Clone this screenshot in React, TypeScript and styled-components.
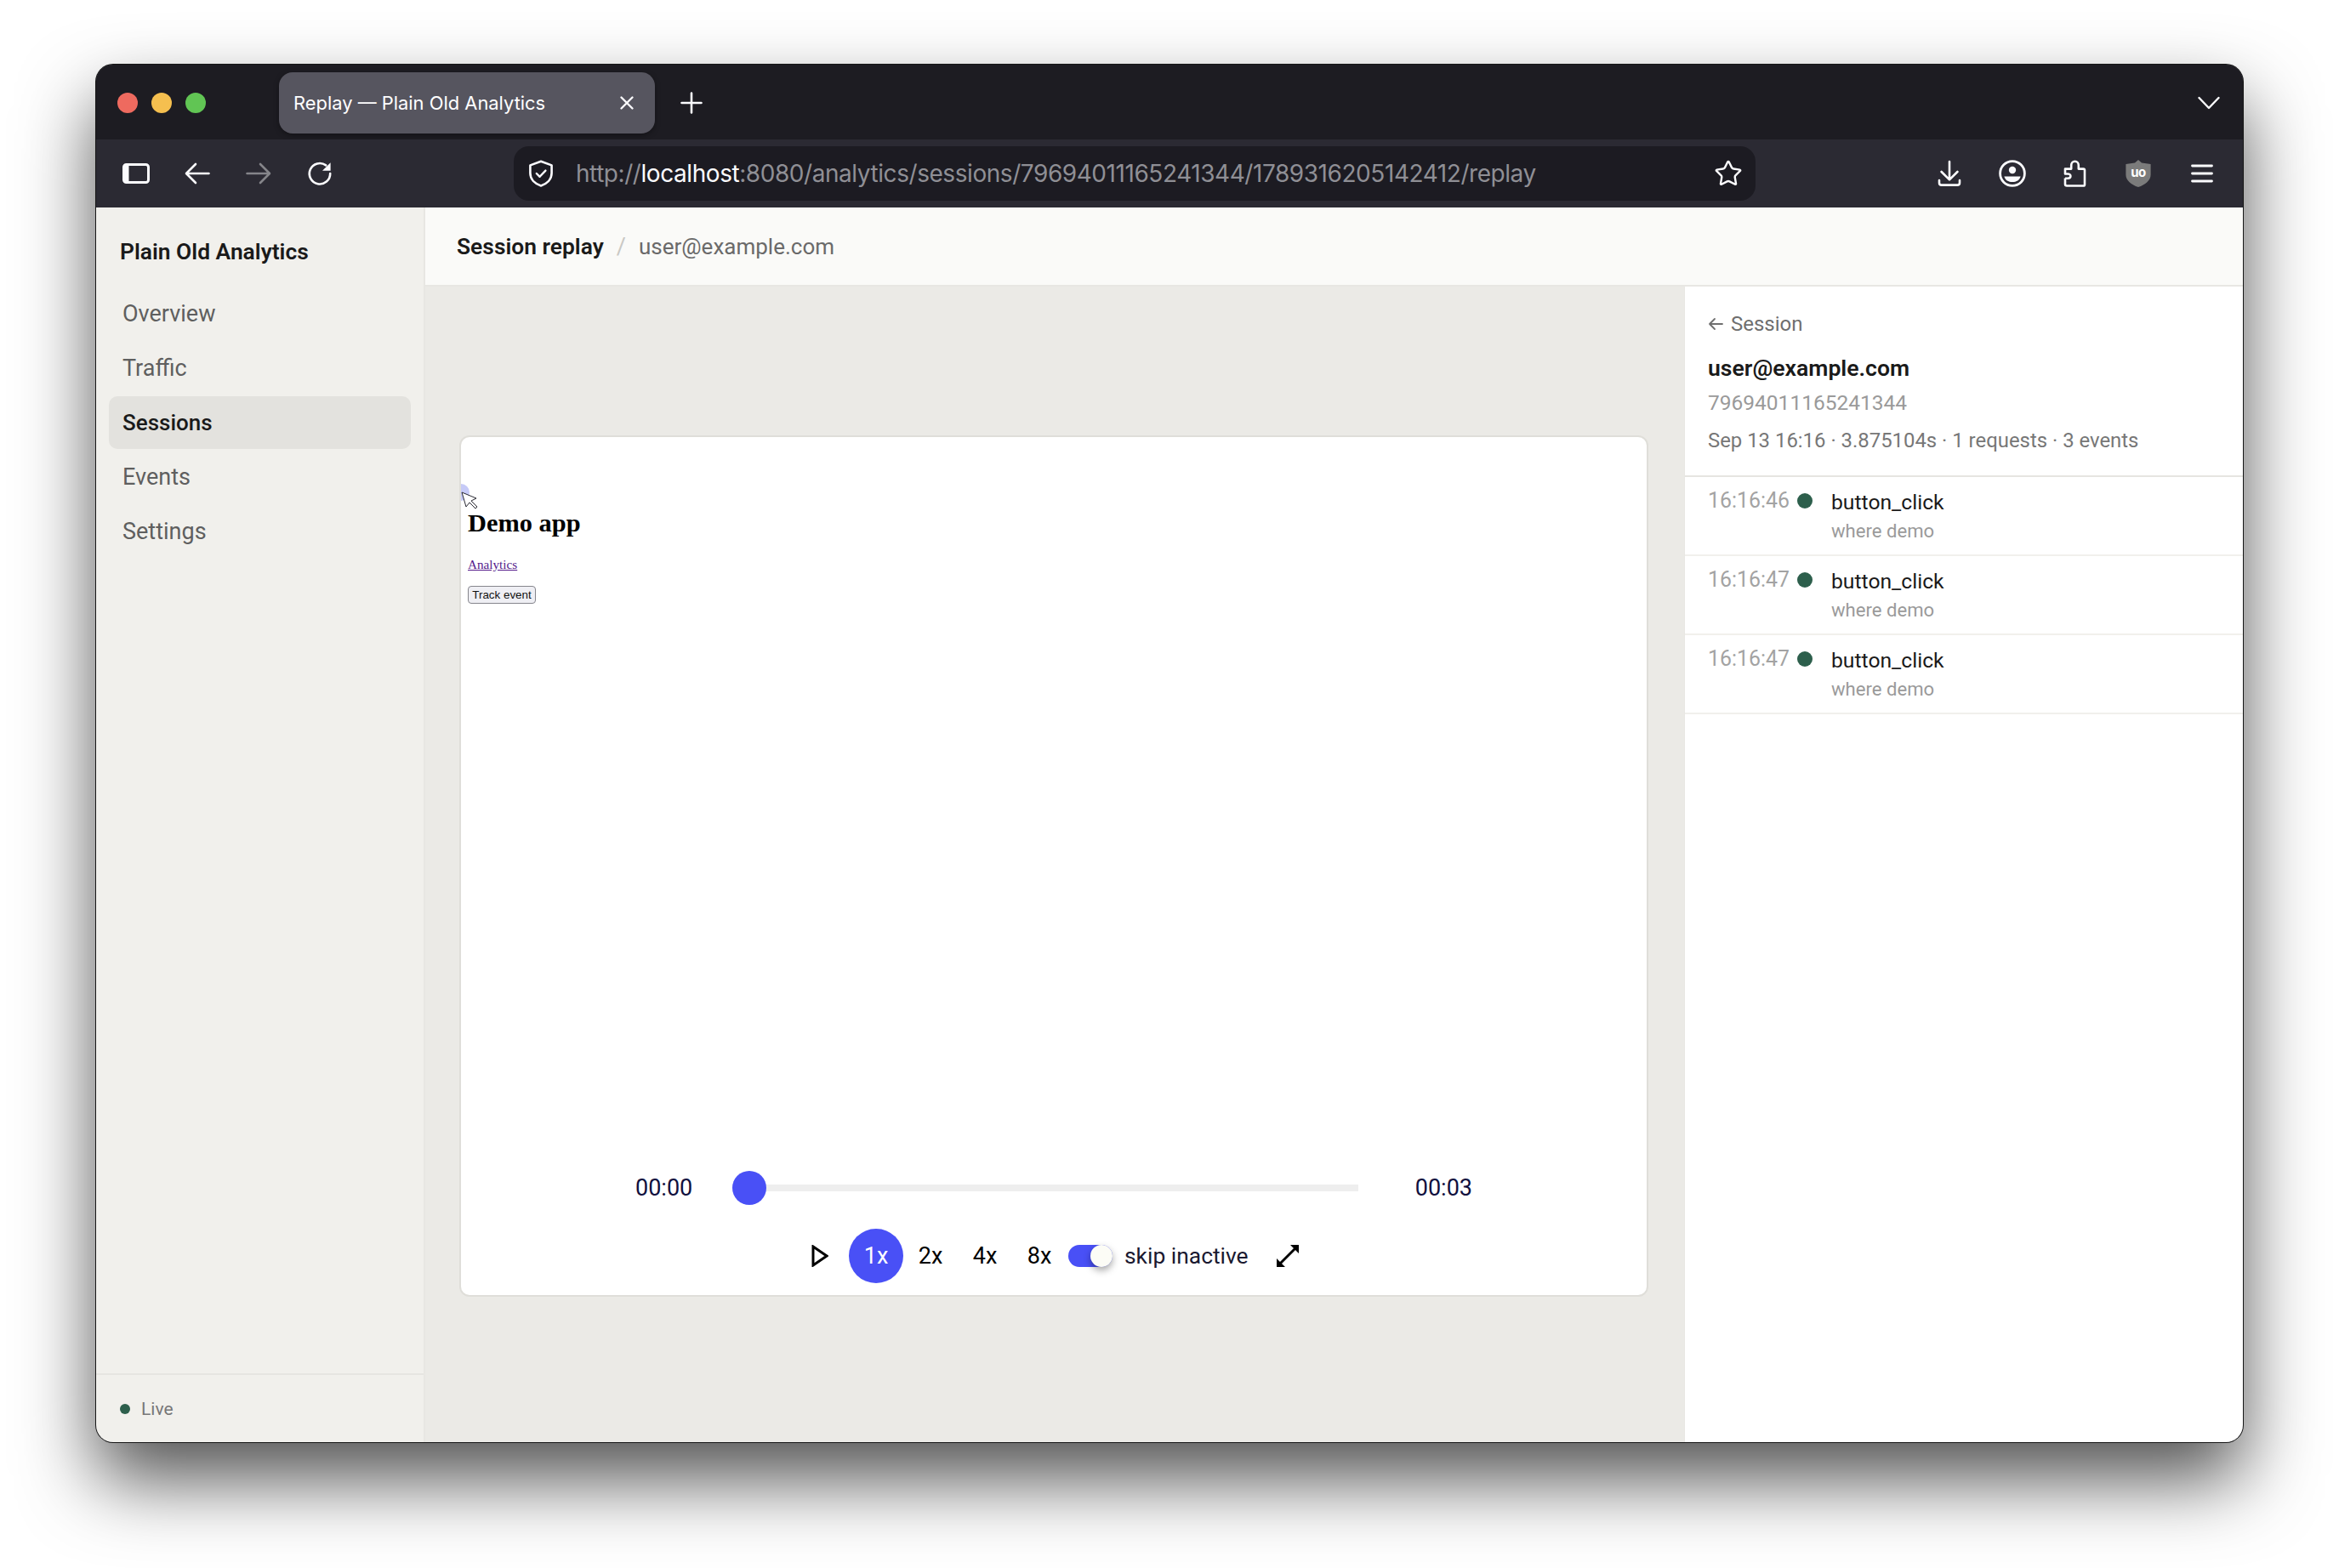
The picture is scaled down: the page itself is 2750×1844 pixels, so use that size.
import React from "react";
import styled, { createGlobalStyle } from "styled-components";
import { Star } from "lucide-react";

const plex = `Roboto, "Liberation Sans", sans-serif`;
const chrome = `Inter, "Liberation Sans", sans-serif`;
const serif = `"Liberation Serif", "Times New Roman", serif`;

const GlobalStyle = createGlobalStyle`
  html, body {
    margin: 0;
    padding: 0;
    background: #ffffff;
  }
  * {
    box-sizing: border-box;
  }
`;

const Page = styled.div`
  width: 2750px;
  height: 1844px;
  padding: 76px 113px 148px;
  display: flex;
  overflow: hidden;
  background: #ffffff;
`;

const Window = styled.div`
  flex: 1;
  display: flex;
  flex-direction: column;
  border-radius: 20px;
  overflow: hidden;
  background: #1c1b22;
  box-shadow: 0 0 0 1px #161616, inset 0 2px 0 #55555a, 0 44px 88px rgba(0, 0, 0, 0.68);
`;

const TabStrip = styled.div`
  height: 88px;
  flex: none;
  display: flex;
  align-items: center;
  padding: 1px 27px 0 25px;
  background: #1d1c22;
`;

const Lights = styled.div`
  display: flex;
  gap: 16px;
`;

const Light = styled.span<{ $color: string }>`
  width: 24px;
  height: 24px;
  border-radius: 50%;
  background: ${(p) => p.$color};
`;

const Tab = styled.div`
  width: 442px;
  height: 72px;
  margin-left: 86px;
  padding: 0 24px 0 17px;
  display: flex;
  align-items: center;
  justify-content: space-between;
  border-radius: 16px;
  background: #56555f;
  box-shadow: 0 2px 6px rgba(0, 0, 0, 0.35);
  color: #ffffff;
  font: 400 21.9px ${chrome};
`;

const NewTab = styled.span`
  margin-left: 30px;
  display: flex;
`;

const ListAll = styled.span`
  margin-left: auto;
  display: flex;
`;

const Toolbar = styled.div`
  height: 80px;
  flex: none;
  display: flex;
  align-items: center;
  padding: 0 10px 0 11px;
  background: #2b2a33;
`;

const Slot = styled.span<{ $w: number }>`
  width: ${(p) => p.$w}px;
  height: 48px;
  flex: none;
  display: flex;
  align-items: center;
  justify-content: center;
`;

const UrlBar = styled.div`
  flex: 1;
  height: 64px;
  margin: 0 191px 0 192px;
  padding: 0 15px 0 17px;
  display: flex;
  align-items: center;
  border-radius: 18px;
  background: #1c1b22;
`;

const UrlText = styled.div`
  margin-left: 26px;
  flex: 1;
  color: #8f8f95;
  font: 400 28px ${chrome};
  white-space: nowrap;
  letter-spacing: -0.44px;
`;

const UrlHost = styled.span`
  color: #fbfbfe;
`;

const Shell = styled.div`
  flex: 1;
  min-height: 0;
  display: flex;
`;

const Sidebar = styled.aside`
  width: 387px;
  flex: none;
  display: flex;
  flex-direction: column;
  background: #f1f0ec;
  border-right: 2px solid #e8e7e3;
  font-family: ${plex};
`;

const Brand = styled.div`
  margin: 36px 0 26px 28px;
  color: #1a1a1a;
  font-size: 26.4px;
  font-weight: 600;
  line-height: 32px;
`;

const Nav = styled.nav`
  display: flex;
  flex-direction: column;
  gap: 2px;
  padding: 0 15px;
`;

const NavItem = styled.a<{ $active?: boolean }>`
  height: 62px;
  padding-left: 16px;
  display: flex;
  align-items: center;
  border-radius: 10px;
  font-size: ${(p) => (p.$active ? 26 : 27)}px;
  font-weight: ${(p) => (p.$active ? 500 : 400)};
  color: ${(p) => (p.$active ? "#1a1a1a" : "#5f5f5f")};
  background: ${(p) => (p.$active ? "#e3e2de" : "transparent")};
`;

const SidebarFooter = styled.div`
  height: 81px;
  margin-top: auto;
  padding-left: 28px;
  display: flex;
  align-items: center;
  gap: 13px;
  border-top: 2px solid #e6e5e1;
  color: #777777;
  font-size: 21px;
`;

const Dot = styled.span<{ $size: number }>`
  width: ${(p) => p.$size}px;
  height: ${(p) => p.$size}px;
  flex: none;
  border-radius: 50%;
  background: #2d5f4c;
`;

const Content = styled.main`
  flex: 1;
  min-width: 0;
  display: flex;
  flex-direction: column;
  font-family: ${plex};
`;

const Header = styled.header`
  height: 93px;
  flex: none;
  padding: 1px 0 0 37px;
  display: flex;
  align-items: center;
  background: #fafaf8;
  border-bottom: 2px solid #e8e7e3;
`;

const HeaderTitle = styled.span`
  color: #1a1a1a;
  font-size: 26.4px;
  font-weight: 600;
`;

const HeaderSlash = styled.span`
  margin: 0 15px;
  color: #c9c8c4;
  font-size: 27px;
`;

const HeaderUser = styled.span`
  color: #6a6a6a;
  font-size: 26px;
`;

const Body = styled.div`
  flex: 1;
  min-height: 0;
  display: flex;
`;

const Stage = styled.div`
  flex: 1;
  padding: 0 42px 0 40px;
  display: flex;
  align-items: center;
  background: #ebeae6;
`;

const Card = styled.div`
  width: 100%;
  height: 1013px;
  margin-top: 4px;
  display: flex;
  flex-direction: column;
  overflow: hidden;
  border: 2px solid #dfded9;
  border-radius: 12px;
  background: #ffffff;
`;

const ReplayFrame = styled.div`
  position: relative;
  flex: 1;
  padding: 83px 0 0 8px;
`;

const ClickRipple = styled.span`
  position: absolute;
  left: -10px;
  top: 55px;
  width: 20px;
  height: 20px;
  border-radius: 50%;
  background: #c6caf7;
`;

const CursorMark = styled.svg`
  position: absolute;
  left: 0;
  top: 64px;
`;

const DemoTitle = styled.h1`
  margin: 0;
  color: #000000;
  font: 700 30.4px/36px ${serif};
`;

const DemoLink = styled.a`
  display: block;
  margin-top: 22px;
  color: #551a8b;
  font: 400 15.2px/18px ${serif};
  text-decoration: underline;
`;

const DemoButton = styled.button`
  display: block;
  width: 80px;
  height: 21px;
  margin-top: 16px;
  padding: 0;
  border: 1.5px solid #85858c;
  border-radius: 4px;
  background: #efeff4;
  color: #111111;
  font: 400 13.4px "Liberation Sans", sans-serif;
`;

const Controller = styled.div`
  flex: none;
  padding-bottom: 14px;
  font-family: ${plex};
`;

const Timeline = styled.div`
  width: 984px;
  height: 40px;
  margin: 0 auto 28px;
  display: flex;
  align-items: center;
`;

const TimeLabel = styled.span<{ $end?: boolean }>`
  width: ${(p) => (p.$end ? 134 : 114)}px;
  flex: none;
  color: #11103e;
  font-size: 27px;
  text-align: ${(p) => (p.$end ? "right" : "left")};
`;

const Track = styled.div`
  position: relative;
  flex: 1;
  height: 8px;
  background: #eeeeee;
`;

const Thumb = styled.span`
  position: absolute;
  left: 0;
  top: -16px;
  width: 40px;
  height: 40px;
  border-radius: 50%;
  background: #4950f6;
`;

const Controls = styled.div`
  height: 64px;
  display: flex;
  align-items: center;
  justify-content: center;
`;

const SpeedButton = styled.span<{ $active?: boolean }>`
  width: 64px;
  height: 64px;
  display: flex;
  align-items: center;
  justify-content: center;
  border-radius: 50%;
  font-size: 27px;
  color: ${(p) => (p.$active ? "#ffffff" : "#000000")};
  background: ${(p) => (p.$active ? "#4950f6" : "transparent")};
`;

const PlayButton = styled(SpeedButton)`
  margin-right: 2px;
`;

const FullButton = styled(SpeedButton)`
  margin-left: 16px;
`;

const SkipToggle = styled.span`
  position: relative;
  width: 52px;
  height: 26px;
  margin-left: 2px;
  border-radius: 13px;
  background: #4950f6;
`;

const SkipKnob = styled.span`
  position: absolute;
  right: 0;
  top: 0;
  width: 26px;
  height: 26px;
  border-radius: 50%;
  background: #fcfcf6;
  box-shadow: 0 4px 8px rgba(0, 0, 0, 0.35);
`;

const SkipLabel = styled.span`
  margin-left: 14px;
  color: #1a1930;
  font-size: 26.4px;
  width: 144px;
  white-space: nowrap;
`;

const SidePanel = styled.section`
  width: 657px;
  flex: none;
  background: #ffffff;
  border-left: 1px solid #e8e7e3;
`;

const Summary = styled.div`
  height: 224px;
  padding: 30px 0 0 27px;
  border-bottom: 2px solid #e6e5e1;
`;

const BackLink = styled.a`
  display: flex;
  align-items: center;
  gap: 9px;
  height: 28px;
  color: #6f6f6f;
  font-size: 24px;
`;

const SessionEmail = styled.div`
  margin-top: 20px;
  color: #1a1a1a;
  font-size: 26.6px;
  font-weight: 600;
  line-height: 36px;
`;

const SessionId = styled.div`
  margin-top: 9px;
  color: #9a9a9a;
  font-size: 24.5px;
  line-height: 28px;
`;

const SessionMeta = styled.div`
  margin-top: 16px;
  color: #777777;
  font-size: 23.9px;
  line-height: 28px;
`;

const EventRow = styled.div`
  height: 93px;
  padding: 14px 0 0 27px;
  display: flex;
  border-bottom: 2px solid #f1f0ec;
`;

const EventTime = styled.span`
  width: 105px;
  flex: none;
  color: #a3a3a3;
  font-size: 24.9px;
  line-height: 28px;
`;

const EventDot = styled(Dot)`
  margin-top: 5px;
`;

const EventBody = styled.div`
  margin: 2px 0 0 22px;
`;

const EventName = styled.div`
  color: #1a1a1a;
  font-size: 24.7px;
  line-height: 28px;
`;

const EventProps = styled.div`
  margin-top: 6px;
  color: #9a9a9a;
  font-size: 22.1px;
  line-height: 26px;
`;

const navItems = ["Overview", "Traffic", "Sessions", "Events", "Settings"];
const events = ["16:16:46", "16:16:47", "16:16:47"];

const SidebarIcon = () => (
  <svg width="32" height="24" viewBox="0 0 32 24">
    <rect x="1.5" y="1.5" width="29" height="21" rx="3" fill="none" stroke="#fbfbfe" strokeWidth="3" />
    <rect x="2" y="2" width="5.5" height="20" fill="#fbfbfe" />
  </svg>
);

const ArrowIcon = ({ flip, color }: { flip?: boolean; color: string }) => (
  <svg width="30" height="26" viewBox="0 0 30 26" style={flip ? { transform: "scaleX(-1)" } : undefined}>
    <path d="M28.5 13H2.5M13 2 2 13l11 11" fill="none" stroke={color} strokeWidth="2.6" strokeLinecap="round" strokeLinejoin="round" />
  </svg>
);

const ReloadIcon = () => (
  <svg width="30" height="30" viewBox="0 0 30 30">
    <path d="M22.2 5.4A12.2 12.2 0 1 0 27.2 15" fill="none" stroke="#fbfbfe" strokeWidth="2.6" strokeLinecap="round" />
    <path d="M27.6 2.2v9.6h-9.6z" fill="#fbfbfe" />
  </svg>
);

const ShieldIcon = () => (
  <svg width="30" height="32" viewBox="0 0 30 32">
    <path d="M15 1.8 27.6 6.4v9.2c0 7.4-5.4 12.6-12.6 14.8C7.8 28.2 2.4 23 2.4 15.6V6.4z" fill="none" stroke="#fbfbfe" strokeWidth="2.6" strokeLinejoin="round" />
    <path d="m9.8 16 3.8 3.8 6.8-7.2" fill="none" stroke="#fbfbfe" strokeWidth="2.4" strokeLinecap="round" strokeLinejoin="round" />
  </svg>
);

const DownloadIcon = () => (
  <svg width="28" height="32" viewBox="0 0 28 32">
    <path d="M14 2v21M4.6 14 14 23.4 23.4 14" fill="none" stroke="#fbfbfe" strokeWidth="2.6" strokeLinecap="round" strokeLinejoin="round" />
    <path d="M2 24v3c0 1.6 1 2.6 2.6 2.6h18.8c1.6 0 2.6-1 2.6-2.6v-3" fill="none" stroke="#fbfbfe" strokeWidth="2.6" strokeLinecap="round" />
  </svg>
);

const ProfileIcon = () => (
  <svg width="32" height="32" viewBox="0 0 32 32">
    <circle cx="16" cy="16" r="14.4" fill="none" stroke="#fbfbfe" strokeWidth="2.8" />
    <circle cx="16" cy="12" r="4.2" fill="#fbfbfe" />
    <path d="M6.4 19.4h19.2c-1 4.2-4.8 6.6-9.6 6.6s-8.6-2.4-9.6-6.6z" fill="#fbfbfe" />
  </svg>
);

const PuzzleIcon = () => (
  <svg width="28" height="32" viewBox="0 0 28 32">
    <path d="M3 21.500v7c0 1.200.8 2 2 2h19.400c1 0 1.600-.6 1.600-1.600V12.200c0-1-.6-1.600-1.600-1.600h-5.600V6.400c0-2.600-1.800-4.600-4.300-4.600s-4.300 2-4.300 4.600v4.200H3v5.900h3.200c1.800 0 3.200 1 3.200 2.600s-1.400 2.600-3.200 2.600H3" fill="none" stroke="#fbfbfe" strokeWidth="2.6" strokeLinejoin="round" />
  </svg>
);

const UBlockIcon = () => (
  <svg width="30" height="32" viewBox="0 0 30 32">
    <path d="M15 0 19 3.400 29.600 5v12.400c0 6.800-6.400 11.800-14.600 14.600C6.800 29.200.4 24.200.4 17.400V5L11 3.400z" fill="#7b7b7b" />
    <text x="15" y="20" textAnchor="middle" fill="#ffffff" fontFamily="Inter, sans-serif" fontSize="15" fontWeight="700" letterSpacing="-0.6">uo</text>
  </svg>
);

const MenuIcon = () => (
  <svg width="26" height="24" viewBox="0 0 26 24">
    <path d="M1.5 3h23M1.5 12h23M1.5 21h23" fill="none" stroke="#fbfbfe" strokeWidth="2.8" strokeLinecap="round" />
  </svg>
);

const PlayIcon = () => (
  <svg width="20" height="26" viewBox="0 0 20 26">
    <path d="M2 2v22l16-11z" fill="none" stroke="#000000" strokeWidth="3" strokeLinejoin="miter" />
  </svg>
);

const FullscreenIcon = () => (
  <svg width="30" height="30" viewBox="0 0 30 30">
    <path d="M5 25 25 5" fill="none" stroke="#000000" strokeWidth="3" />
    <path d="M18 2h10v10zM2 18v10h10z" fill="#000000" />
  </svg>
);

export default function App() {
  return (
    <>
      <GlobalStyle />
      <Page>
        <Window>
          <TabStrip>
            <Lights>
              <Light $color="#ee6a5f" />
              <Light $color="#f5bf4f" />
              <Light $color="#61c554" />
            </Lights>
            <Tab>
              Replay — Plain Old Analytics
              <svg width="18" height="18" viewBox="0 0 18 18">
                <path d="M2.5 2.5l13 13M15.5 2.5l-13 13" stroke="#fbfbfe" strokeWidth="2.4" strokeLinecap="round" />
              </svg>
            </Tab>
            <NewTab>
              <svg width="26" height="26" viewBox="0 0 26 26">
                <path d="M13 1.500v23M1.500 13h23" stroke="#fbfbfe" strokeWidth="2.6" strokeLinecap="round" />
              </svg>
            </NewTab>
            <ListAll>
              <svg width="26" height="16" viewBox="0 0 26 16">
                <path d="M1.5 2 13 14 24.500 2" fill="none" stroke="#fbfbfe" strokeWidth="2.4" strokeLinecap="round" strokeLinejoin="round" />
              </svg>
            </ListAll>
          </TabStrip>
          <Toolbar>
            <Slot $w={72}><SidebarIcon /></Slot>
            <Slot $w={72}><ArrowIcon color="#fbfbfe" /></Slot>
            <Slot $w={72}><ArrowIcon flip color="#85858a" /></Slot>
            <Slot $w={72}><ReloadIcon /></Slot>
            <UrlBar>
              <ShieldIcon />
              <UrlText>
                http://<UrlHost>localhost</UrlHost>:8080/analytics/sessions/79694011165241344/1789316205142412/replay
              </UrlText>
              <Star size={34} color="#fbfbfe" strokeWidth={1.7} />
            </UrlBar>
            <Slot $w={74}><DownloadIcon /></Slot>
            <Slot $w={73}><ProfileIcon /></Slot>
            <Slot $w={74}><PuzzleIcon /></Slot>
            <Slot $w={75}><UBlockIcon /></Slot>
            <Slot $w={76}><MenuIcon /></Slot>
          </Toolbar>
          <Shell>
            <Sidebar>
              <Brand>Plain Old Analytics</Brand>
              <Nav>
                {navItems.map((item) => (
                  <NavItem key={item} $active={item === "Sessions"}>
                    {item}
                  </NavItem>
                ))}
              </Nav>
              <SidebarFooter>
                <Dot $size={12} />
                Live
              </SidebarFooter>
            </Sidebar>
            <Content>
              <Header>
                <HeaderTitle>Session replay</HeaderTitle>
                <HeaderSlash>/</HeaderSlash>
                <HeaderUser>user@example.com</HeaderUser>
              </Header>
              <Body>
                <Stage>
                  <Card>
                    <ReplayFrame>
                      <ClickRipple />
                      <CursorMark width="20" height="21" viewBox="0 0 20 21">
                        <path d="M1 1 18 8 12 11 19 18 17 20 10 13 6 18z" fill="#ffffff" stroke="#2a2a33" strokeWidth="1" strokeLinejoin="miter" />
                      </CursorMark>
                      <DemoTitle>Demo app</DemoTitle>
                      <DemoLink>Analytics</DemoLink>
                      <DemoButton>Track event</DemoButton>
                    </ReplayFrame>
                    <Controller>
                      <Timeline>
                        <TimeLabel>00:00</TimeLabel>
                        <Track>
                          <Thumb />
                        </Track>
                        <TimeLabel $end>00:03</TimeLabel>
                      </Timeline>
                      <Controls>
                        <PlayButton><PlayIcon /></PlayButton>
                        <SpeedButton $active>1x</SpeedButton>
                        <SpeedButton>2x</SpeedButton>
                        <SpeedButton>4x</SpeedButton>
                        <SpeedButton>8x</SpeedButton>
                        <SkipToggle>
                          <SkipKnob />
                        </SkipToggle>
                        <SkipLabel>skip inactive</SkipLabel>
                        <FullButton><FullscreenIcon /></FullButton>
                      </Controls>
                    </Controller>
                  </Card>
                </Stage>
                <SidePanel>
                  <Summary>
                    <BackLink>
                      <svg width="18" height="16" viewBox="0 0 18 16">
                        <path d="M17 8H2M8 2 2 8l6 6" fill="none" stroke="#6f6f6f" strokeWidth="1.8" strokeLinecap="round" strokeLinejoin="round" />
                      </svg>
                      Session
                    </BackLink>
                    <SessionEmail>user@example.com</SessionEmail>
                    <SessionId>79694011165241344</SessionId>
                    <SessionMeta>Sep 13 16:16 · 3.875104s · 1 requests · 3 events</SessionMeta>
                  </Summary>
                  {events.map((time, i) => (
                    <EventRow key={i}>
                      <EventTime>{time}</EventTime>
                      <EventDot $size={18} />
                      <EventBody>
                        <EventName>button_click</EventName>
                        <EventProps>where demo</EventProps>
                      </EventBody>
                    </EventRow>
                  ))}
                </SidePanel>
              </Body>
            </Content>
          </Shell>
        </Window>
      </Page>
    </>
  );
}
